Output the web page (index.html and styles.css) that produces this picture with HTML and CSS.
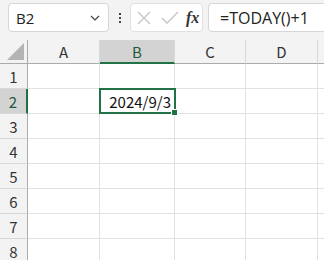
FILE: index.html
```html
<!DOCTYPE html>
<html>
<head>
<meta charset="utf-8">
<link rel="stylesheet" href="styles.css">
</head>
<body>
<div class="app">
  <div class="toolbar">
    <div class="namebox">
      <span class="name">B2</span>
      <svg class="chev" width="10" height="6" viewBox="0 0 10 6"><path d="M1 1 L5 5 L9 1" fill="none" stroke="#444" stroke-width="1.2"/></svg>
    </div>
    <div class="dots"><span></span><span></span><span></span></div>
    <div class="fxbox">
      <svg width="16" height="16" viewBox="0 0 16 16"><path d="M2 2 L14 14 M14 2 L2 14" stroke="#c4c4c4" stroke-width="1.3" fill="none"/></svg>
      <svg width="18" height="16" viewBox="0 0 18 16"><path d="M1 8 L6 13 L17 2" stroke="#c4c4c4" stroke-width="1.3" fill="none"/></svg>
      <span class="fx">fx</span>
    </div>
    <div class="formula">=TODAY()+1</div>
  </div>
  <div class="sheet">
    <div class="grid">
      <div class="corner"><div class="tri"></div></div>
      <div class="ch">A</div>
      <div class="ch sel">B</div>
      <div class="ch">C</div>
      <div class="ch">D</div>
      <div class="ch last"></div>

      <div class="rh">1</div><div class="c"></div><div class="c"></div><div class="c"></div><div class="c"></div><div class="c last"></div>
      <div class="rh sel">2</div><div class="c"></div><div class="c val">2024/9/3</div><div class="c"></div><div class="c"></div><div class="c last"></div>
      <div class="rh">3</div><div class="c"></div><div class="c"></div><div class="c"></div><div class="c"></div><div class="c last"></div>
      <div class="rh">4</div><div class="c"></div><div class="c"></div><div class="c"></div><div class="c"></div><div class="c last"></div>
      <div class="rh">5</div><div class="c"></div><div class="c"></div><div class="c"></div><div class="c"></div><div class="c last"></div>
      <div class="rh">6</div><div class="c"></div><div class="c"></div><div class="c"></div><div class="c"></div><div class="c last"></div>
      <div class="rh">7</div><div class="c"></div><div class="c"></div><div class="c"></div><div class="c"></div><div class="c last"></div>
      <div class="rh">8</div><div class="c"></div><div class="c"></div><div class="c"></div><div class="c"></div><div class="c last"></div>
    </div>
    <div class="selbox"><div class="handle"></div></div>
  </div>
</div>
</body>
</html>
```
FILE: styles.css
```css
html, body {
  margin: 0;
  padding: 0;
  background: #ffffff;
  overflow: hidden;
}
.app {
  width: 324px;
  height: 260px;
  overflow: hidden;
  font-family: "Noto Sans CJK JP", "Open Sans", sans-serif;
  color: #222;
}
.toolbar {
  height: 40px;
  box-sizing: border-box;
  background: #f3f3f3;
  display: flex;
  align-items: flex-start;
  padding: 3px 0 0 8px;
}
.namebox {
  width: 101px;
  height: 29px;
  box-sizing: border-box;
  background: #fff;
  border: 1px solid #d6d6d6;
  border-radius: 4px;
  display: flex;
  align-items: center;
  justify-content: space-between;
  padding: 0 8px 0 7px;
}
.name {
  font-family: "Open Sans", "Noto Sans", sans-serif;
  font-size: 15px;
  color: #222;
}
.dots {
  width: 21px;
  height: 29px;
  display: flex;
  flex-direction: column;
  align-items: center;
  justify-content: center;
  gap: 2px;
}
.dots span {
  width: 2px;
  height: 2px;
  background: #444;
}
.fxbox {
  width: 73px;
  height: 29px;
  box-sizing: border-box;
  background: #fff;
  border: 1px solid #e0e0e0;
  border-radius: 4px;
  display: flex;
  align-items: center;
  padding: 0 0 0 5px;
  gap: 9px;
}
.fx {
  font-family: "Liberation Serif", "DejaVu Serif", serif;
  font-style: italic;
  font-weight: bold;
  font-size: 16px;
  color: #333;
  margin-left: -2px;
}
.formula {
  margin-left: 5px;
  flex: 1;
  margin-right: -10px;
  height: 29px;
  box-sizing: border-box;
  background: #fff;
  border: 1px solid #d6d6d6;
  border-radius: 4px;
  display: flex;
  align-items: center;
  padding-left: 11px;
  font-family: "Open Sans", "Noto Sans", sans-serif;
  font-size: 16px;
  color: #222;
}
.sheet {
  position: relative;
}
.grid {
  display: grid;
  grid-template-columns: 28px 72px 75px 71px 72px 1fr;
  grid-template-rows: 24px repeat(8, 25px);
}
.grid > div {
  box-sizing: border-box;
}
.corner {
  background: #f3f3f3;
  border-right: 1px solid #ababab;
  border-bottom: 1px solid #ababab;
  position: relative;
}
.tri {
  position: absolute;
  right: 3px;
  bottom: 3px;
  width: 0;
  height: 0;
  border-left: 17px solid transparent;
  border-bottom: 17px solid #b4b4b4;
}
.ch {
  background: #f3f3f3;
  border-right: 1px solid #d8d8d8;
  border-bottom: 1px solid #ababab;
  display: flex;
  align-items: center;
  justify-content: center;
  font-size: 15px;
  color: #333;
}
.ch.sel {
  background: #d3d3d3;
  border-bottom: 2px solid #217346;
  color: #1e5a3a;
}
.ch.last { border-right: none; }
.rh {
  background: #f3f3f3;
  border-right: 1px solid #ababab;
  border-bottom: 1px solid #d8d8d8;
  display: flex;
  align-items: center;
  justify-content: center;
  font-size: 15px;
  color: #333;
  padding-top: 1px;
}
.rh.sel {
  background: #d3d3d3;
  border-right: 2px solid #217346;
  color: #1e5a3a;
}
.c {
  border-right: 1px solid #e1e1e1;
  border-bottom: 1px solid #e1e1e1;
}
.c.last { border-right: none; }
.val {
  display: flex;
  align-items: center;
  justify-content: flex-end;
  padding-right: 3px;
  font-size: 15px;
  color: #111;
}
.selbox {
  position: absolute;
  left: 99px;
  top: 48px;
  width: 77px;
  height: 26px;
  box-sizing: border-box;
  border: 2px solid #217346;
}
.handle {
  position: absolute;
  right: -4px;
  bottom: -4px;
  width: 5px;
  height: 5px;
  background: #217346;
  border: 1px solid #fff;
}
```
